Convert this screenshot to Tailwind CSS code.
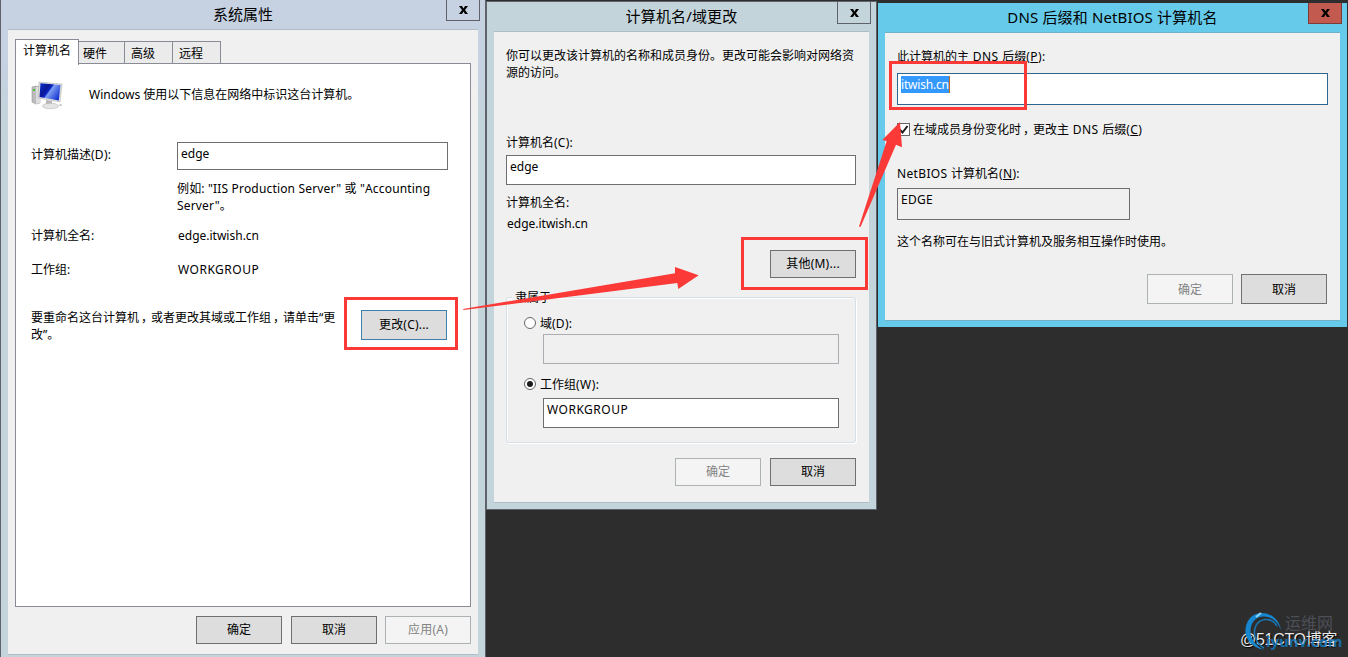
<!DOCTYPE html>
<html lang="zh-CN">
<head>
  <meta charset="UTF-8" />
  <title>系统属性</title>
  <script src="https://cdn.jsdelivr.net/npm/@tailwindcss/browser@4"></script>
  <style>
    body { font-family: 'Noto Sans', 'Noto Sans CJK SC', sans-serif; }
  </style>
</head>
<body class="relative h-[657px] w-[1348px] overflow-hidden bg-[#2d2d2d] text-[12px] leading-[17px] text-black">

  <!-- System properties -->
  <div class="absolute left-0 top-0 flex h-[657px] w-[486px] flex-col border-x border-[#5f626b] bg-linear-to-b from-[#c6d1e1] from-10% to-[#c3d5db] to-20% px-[7px]">
    <div class="relative flex h-[29px] shrink-0 items-center justify-center text-[15px]">
      <span>系统属性</span>
      <button class="absolute -right-0.5 top-0 flex h-[21px] w-[34px] items-center justify-center border border-t-0 border-[#5f626b]">
        <svg class="h-2 w-[9px]" viewBox="0 0 9 8"><path d="M0 0h3l1.500 2.500L6 0h3L6 4l3 4H6L4.500 5.500 3 8H0l3-4z" /></svg>
      </button>
    </div>
    <div class="h-[626px] border-y border-[#b0bcc8] bg-[#f0f0f0] px-[7px] pt-[9px]">
      <div class="flex h-6 items-end">
        <div class="z-10 -mb-0.5 h-[26px] w-16 border border-b-0 border-[#898c95] bg-white pl-[7px] pt-0.5">计算机名</div>
        <div class="h-[22px] w-[46px] border border-b-0 border-l-0 border-[#898c95] bg-[#ebebeb] pl-1 pt-[3px]">硬件</div>
        <div class="h-[22px] w-12 border border-b-0 border-l-0 border-[#898c95] bg-[#ebebeb] pl-[6px] pt-[3px]">高级</div>
        <div class="h-[22px] w-12 border border-b-0 border-l-0 border-[#898c95] bg-[#ebebeb] pl-[6px] pt-[3px]">远程</div>
      </div>
      <div class="h-[544px] w-[456px] border border-[#898c95] bg-white pl-[15px] pt-[17px]">
        <div class="flex h-[30px] items-start">
          <svg class="h-[30px] w-8 shrink-0" viewBox="0 0 32 30">
            <defs>
              <linearGradient id="screen" x1="0" y1="0.200" x2="1" y2="0.800">
                <stop offset="0" stop-color="#0a2ac4" />
                <stop offset=".3" stop-color="#0a1796" />
                <stop offset=".42" stop-color="#0a26c8" />
                <stop offset=".48" stop-color="#7f9ff2" />
                <stop offset="1" stop-color="#0a2ad0" />
              </linearGradient>
            </defs>
            <path d="M1 6l4-1 4 1v16l-4 1-4-2z" fill="#bcbcbc" stroke="#888" stroke-width=".5" />
            <path d="M5 6l4 0v16l-4 1z" fill="#dedede" />
            <rect x="2" y="8" width="2" height="2" fill="#4fc62f" />
            <path d="M15 19l6 1v4l-6-1z" fill="#b8b8b8" />
            <path d="M8 1l23 2-2 18L7 17z" fill="#e0e0e0" stroke="#aaa" stroke-width=".5" />
            <path d="M9.500 2.200l20 1.900-1.700 15.500L8.500 16z" fill="url(#screen)" />
            <ellipse cx="19.500" cy="25" rx="8" ry="2.800" fill="#e4e4e4" stroke="#aaa" stroke-width=".5" />
            <ellipse cx="29.500" cy="24" rx="1.600" ry="1" fill="#ccc" />
          </svg>
          <p class="ml-[26px] mt-[5px]">Windows 使用以下信息在网络中标识这台计算机。</p>
        </div>
        <div class="mt-[31px] flex h-7">
          <label class="w-[146px] pt-1">计算机描述<span class="tracking-[0.25px]">(D):</span></label>
          <div class="h-7 w-[271px] border border-[#6e6e72] bg-white pl-[3px] pt-0.5">edge</div>
        </div>
        <p class="ml-[146px] mt-[10px] whitespace-nowrap tracking-[0.17px]">例如: "IIS Production Server" 或 "Accounting<br>Server"。</p>
        <div class="mt-[13px] flex">
          <span class="w-[147px]">计算机全名:</span>
          <span>edge.itwish.cn</span>
        </div>
        <div class="mt-[17px] flex">
          <span class="w-[147px]">工作组:</span>
          <span class="tracking-[0.5px]">WORKGROUP</span>
        </div>
        <div class="mt-8 flex">
          <p class="-mt-px w-[330px] whitespace-nowrap">要重命名这台计算机<span class="inline-block w-3 pl-0.5">，</span>或者更改其域或工作组<span class="inline-block w-3 pl-0.5">，</span>请单击“更<br>改”。</p>
          <button class="flex h-[30px] w-[86px] items-center justify-center border border-[#3c7fb1] bg-[#dddddd] pb-0.5 tracking-[0.2px]">更改(C)...</button>
        </div>
      </div>
      <div class="mt-[9px] flex justify-end">
        <button class="h-7 w-[86px] border border-[#707070] bg-[#dddddd] pb-0.5">确定</button>
        <button class="ml-[9px] h-7 w-[86px] border border-[#707070] bg-[#dddddd] pb-0.5">取消</button>
        <button class="ml-2 h-7 w-[86px] border border-[#adb2b5] bg-[#f4f4f4] pb-0.5 tracking-[0.2px] text-[#838383]">应用(A)</button>
      </div>
    </div>
  </div>

  <!-- Computer name / domain changes -->
  <div class="absolute left-[486px] top-px flex h-[509px] w-[391px] flex-col border border-[#5f626b] bg-[#c3d5db] px-[7px]">
    <div class="relative flex h-[29px] shrink-0 items-center justify-center text-[15px]">
      <span class="tracking-[0.15px]">计算机名/域更改</span>
      <button class="absolute -right-0.5 -top-px flex h-[23px] w-[34px] items-center justify-center border border-[#5f626b]">
        <svg class="h-2 w-[9px]" viewBox="0 0 9 8"><path d="M0 0h3l1.500 2.500L6 0h3L6 4l3 4H6L4.500 5.500 3 8H0l3-4z" /></svg>
      </button>
    </div>
    <div class="h-[472px] w-[375px] border-y border-[#b0bcc8] bg-[#f0f0f0] pl-3 pt-[15px]">
      <p class="whitespace-nowrap">你可以更改该计算机的名称和成员身份。更改可能会影响对网络资<br>源的访问。</p>
      <label class="mt-[53px] block">计算机名<span class="tracking-[0.25px]">(C):</span></label>
      <div class="mt-1 h-[30px] w-[350px] border border-[#6e6e72] bg-white pl-[3px] pt-0.5">edge</div>
      <p class="mt-[9px]">计算机全名:</p>
      <p class="ml-px mt-1">edge.itwish.cn</p>
      <button class="ml-[264px] mt-[18px] block h-7 w-[86px] border border-[#707070] bg-[#dddddd] pb-0.5 tracking-[0.25px]">其他(M)...</button>
      <div class="relative mt-[19px] h-[146px] w-[350px] rounded-[3px] border border-[#d5dfe5] pl-[17px] pt-[17px] shadow-[inset_1px_1px_0_#fff,1px_1px_0_#fff]">
        <span class="absolute -top-[9px] left-[5px] bg-[#f0f0f0] px-[3px]">隶属于</span>
        <div class="-mt-px flex h-[17px] items-center">
          <span class="size-3 rounded-full border border-[#666] bg-white"></span>
          <label class="ml-1 mt-px">域<span class="tracking-[0.25px]">(D):</span></label>
        </div>
        <div class="ml-[19px] mt-[3px] h-[30px] w-[296px] border border-[#abadb3]"></div>
        <div class="mt-[11px] flex h-[17px] items-center">
          <span class="flex size-3 items-center justify-center rounded-full border border-[#666] bg-white"><span class="size-1.5 rounded-full bg-[#1c1c1c]"></span></span>
          <label class="ml-1 mt-px">工作组<span class="tracking-[0.45px]">(W):</span></label>
        </div>
        <div class="ml-[19px] mt-[6px] h-[30px] w-[296px] border border-[#6e6e72] bg-white pl-[3px] pt-0.5 tracking-[0.5px]">WORKGROUP</div>
      </div>
      <div class="mt-[15px] flex w-[350px] justify-end gap-[9px]">
        <button class="h-7 w-[86px] border border-[#adb2b5] bg-[#f4f4f4] pb-0.5 text-[#838383]">确定</button>
        <button class="h-7 w-[86px] border border-[#707070] bg-[#dddddd] pb-0.5">取消</button>
      </div>
    </div>
  </div>

  <!-- DNS suffix and NetBIOS name -->
  <div class="absolute left-[878px] top-[3px] flex h-[324px] w-[469px] flex-col bg-[#66caea] px-[7px]">
    <div class="relative flex h-[29px] shrink-0 items-center justify-center text-[15px]">
      <span class="whitespace-nowrap tracking-[0.15px]">DNS 后缀和 NetBIOS 计算机名</span>
      <button class="absolute -right-0.5 top-0 flex h-[21px] w-[34px] items-center justify-center border border-t-0 border-[#7c3b3b] bg-[#c35a50]">
        <svg class="h-2 w-[9px]" viewBox="0 0 9 8"><path d="M0 0h3l1.500 2.500L6 0h3L6 4l3 4H6L4.500 5.500 3 8H0l3-4z" /></svg>
      </button>
    </div>
    <div class="h-[289px] border-y border-[#72b0c9] bg-[#f0f0f0] pl-3 pt-[15px]">
      <label class="block">此计算机的主<span class="tracking-[0.5px]"> DNS </span>后缀<span class="tracking-[0.4px]">(<u>P</u>):</span></label>
      <div class="mt-2 h-8 w-[431px] border border-[#2f6690] bg-white pl-[3px] pt-0.5"><span class="inline-block h-[17px] border-r border-[#c86a14] bg-[#3399ff] tracking-[-0.2px] text-white">itwish.cn</span></div>
      <div class="mt-4 flex h-[17px] items-center">
        <span class="flex size-[13px] items-center justify-center border border-[#666] bg-white">
          <svg class="size-[11px]" viewBox="0 0 11 11"><path d="M1.500 5.500l3 3L9.500 2" fill="none" stroke="#1c1c1c" stroke-width="2" /></svg>
        </span>
        <label class="ml-[3px]">在域成员身份变化时<span class="inline-block w-3 pl-0.5">，</span>更改主<span class="tracking-[0.5px]"> DNS </span>后缀<span class="tracking-[0.4px]">(<u>C</u>)</span></label>
      </div>
      <label class="mt-[27px] block"><span class="tracking-[0.35px]">NetBIOS </span>计算机名<span class="tracking-[0.35px]">(<u>N</u>):</span></label>
      <div class="mt-[6px] h-8 w-[233px] border border-[#6e6e72] pl-[3px] pt-0.5 tracking-[0.3px]">EDGE</div>
      <p class="mt-[13px]">这个名称可在与旧式计算机及服务相互操作时使用。</p>
      <div class="mt-6 flex w-[430px] justify-end gap-2">
        <button class="h-[30px] w-[86px] border border-[#adb2b5] bg-[#f4f4f4] text-[#838383]">确定</button>
        <button class="h-[30px] w-[86px] border border-[#707070] bg-[#dddddd]">取消</button>
      </div>
    </div>
  </div>

  <!-- Red step markers -->
  <svg class="absolute left-0 top-0 h-[657px] w-[1348px]" viewBox="0 0 1348 657">
    <g fill="none" stroke="#fb3a38" stroke-width="3">
      <rect x="345.500" y="298.500" width="111" height="50" />
      <rect x="742.500" y="238.500" width="124" height="50" />
      <rect x="890.500" y="62.500" width="135" height="46" />
    </g>
    <g fill="#fb3a38">
      <path d="M463 309L675 273.300V267L698.700 275.300 678.300 289 677.300 283 463.500 310z" />
      <path d="M859 226.500L886.700 141 882.300 140 900 122 902 147.300 896 144.700 860.500 227z" />
    </g>
  </svg>

  <!-- Watermark -->
  <div class="absolute left-[1238px] top-[605px] h-[50px] w-[110px] whitespace-nowrap">
    <span class="absolute left-[47px] top-[7px] text-[16px] leading-[22px] text-[#4d4f58]">运维网</span>
    <span class="absolute left-[2px] top-[24px] font-['Liberation_Sans','Noto_Sans_CJK_SC',sans-serif] text-[16px] leading-[22px] tracking-[-0.3px] text-[#e8e8e8] [text-shadow:1px_1px_1px_#000]">@51CTO博客</span>
    <svg class="absolute left-[6px] top-[3px] h-[44px] w-[40px]" viewBox="0 0 40 44">
      <path d="M37 22C34 5 15 0 6 10C-3 21 1 38 20 42C8 36 3 24 9 14C16 5 31 7 37 22z" fill="#1687cf" />
      <path d="M33 18C27 8 14 10 11 20C9 28 13 36 20 40" fill="none" stroke="#1976b5" stroke-width="1.500" />
      <path d="M12 9l5-4" stroke="#8bd3fa" stroke-width="2" />
    </svg>
    <span class="absolute left-[28px] top-[26px] text-[15px] font-bold leading-[20px] text-[#1478bd]/85">iyunv.com</span>
  </div>
</body>
</html>
